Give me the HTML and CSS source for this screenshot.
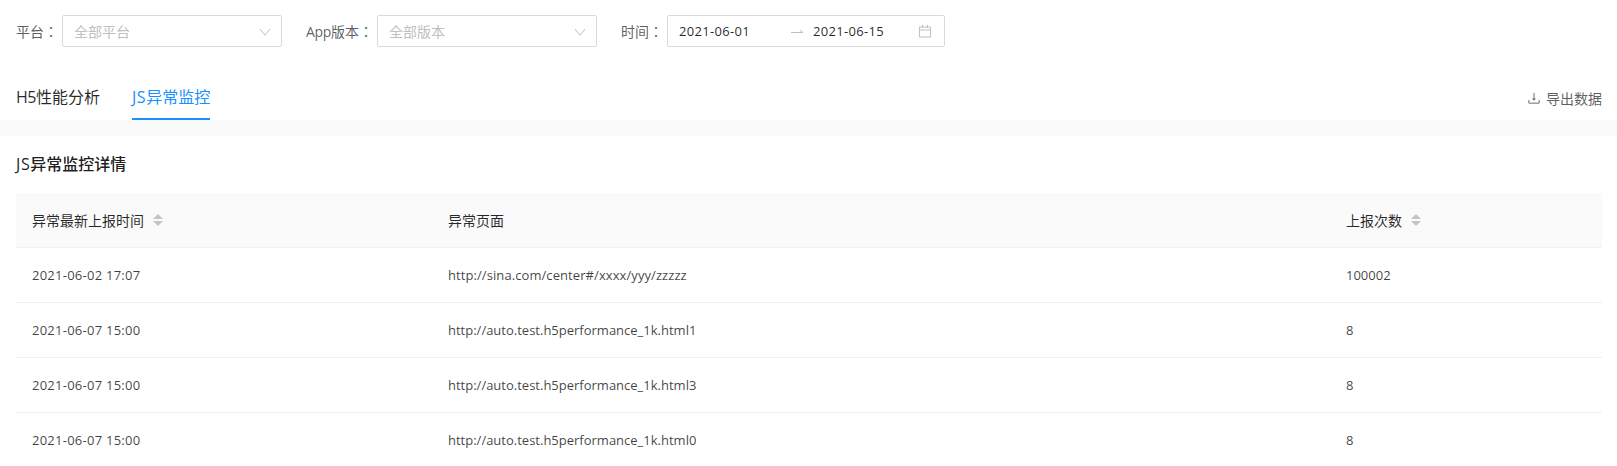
FILE: index.html
```html
<!DOCTYPE html>
<html lang="zh-CN">
<head>
<meta charset="utf-8">
<title>JS异常监控</title>
<link rel="stylesheet" href="styles.css">
</head>
<body>
<div class="filters">
  <div class="field">
    <span class="label">平台<span class="colon" lang="zh-TW">：</span></span>
    <div class="select">
      <span class="placeholder">全部平台</span>
      <svg class="chev" width="12" height="8" viewBox="0 0 12 8"><path d="M1 1 6 7.2 11 1" fill="none" stroke="#bfbfbf" stroke-width="1"/></svg>
    </div>
  </div>
  <div class="field">
    <span class="label"><span class="app">App</span>版本<span class="colon" lang="zh-TW">：</span></span>
    <div class="select">
      <span class="placeholder">全部版本</span>
      <svg class="chev" width="12" height="8" viewBox="0 0 12 8"><path d="M1 1 6 7.2 11 1" fill="none" stroke="#bfbfbf" stroke-width="1"/></svg>
    </div>
  </div>
  <div class="field">
    <span class="label">时间<span class="colon" lang="zh-TW">：</span></span>
    <div class="range">
      <span class="date">2021-06-01</span>
      <svg class="arrow" width="12" height="6" viewBox="0 0 12 6"><path d="M0 4.5H12L9 2" fill="none" stroke="#bfbfbf" stroke-width="1"/></svg>
      <span class="date">2021-06-15</span>
      <svg class="cal" width="14" height="14" viewBox="0 0 14 14"><path d="M1.5 3H12.5V13H1.5ZM1.5 6H12.5M4.5 1V4M9.5 1V4" fill="none" stroke="#bfbfbf" stroke-width="1"/></svg>
    </div>
  </div>
</div>

<div class="tabbar">
  <div class="tab"><span class="h5">H5</span>性能分析</div>
  <div class="tab active"><span class="js">JS</span>异常监控</div>
  <div class="export">
    <svg width="12" height="12" viewBox="0 0 14 14"><path d="M7 1V9M1 9.5V13H13V9.5" fill="none" stroke="#666" stroke-width="1.1"/><path d="M4.8 7.5H9.2L7 10.2Z" fill="#666"/></svg>
    <span>导出数据</span>
  </div>
</div>
<div class="band"></div>

<section class="panel">
  <h2 class="title"><span class="js">JS</span>异常监控详情</h2>
  <div class="table">
    <div class="row head">
      <div class="cell"><span>异常最新上报时间</span><i class="sorter"></i></div>
      <div class="cell"><span>异常页面</span></div>
      <div class="cell"><span>上报次数</span><i class="sorter"></i></div>
    </div>
    <div class="row">
      <div class="cell time">2021-06-02 17:07</div>
      <div class="cell url">http://sina.com/center#/xxxx/yyy/zzzzz</div>
      <div class="cell">100002</div>
    </div>
    <div class="row">
      <div class="cell time">2021-06-07 15:00</div>
      <div class="cell">http://auto.test.h5performance_1k.html1</div>
      <div class="cell">8</div>
    </div>
    <div class="row">
      <div class="cell time">2021-06-07 15:00</div>
      <div class="cell">http://auto.test.h5performance_1k.html3</div>
      <div class="cell">8</div>
    </div>
    <div class="row">
      <div class="cell time">2021-06-07 15:00</div>
      <div class="cell">http://auto.test.h5performance_1k.html0</div>
      <div class="cell">8</div>
    </div>
  </div>
</section>
</body>
</html>
```
FILE: styles.css
```css
* { box-sizing: border-box; }
html, body { margin: 0; padding: 0; height: 466px; overflow: hidden; background: #fff; }
body {
  font-family: "Open Sans", "Noto Sans CJK SC", sans-serif;
  font-size: 14px;
  color: rgba(0, 0, 0, 0.75);
}
.filters { display: flex; gap: 24px; padding: 15px 16px 0; height: 86px; }
.field { display: flex; align-items: center; height: 32px; }
.label { color: rgba(0, 0, 0, 0.65); white-space: nowrap; }
.colon { font-family: "Noto Sans CJK TC", sans-serif; }
.app { letter-spacing: -0.3px; }
.select {
  width: 220px; height: 32px; margin-left: 4px;
  border: 1px solid #d9d9d9; border-radius: 2px;
  display: flex; align-items: center; justify-content: space-between;
  padding: 0 10px 0 11px;
}
.placeholder { color: #bfbfbf; }
.chev { display: block; margin-top: 1px; }
.range {
  width: 278px; height: 32px; margin-left: 4px;
  border: 1px solid #d9d9d9; border-radius: 2px;
  display: flex; align-items: center; padding: 0 11px;
  color: rgba(0, 0, 0, 0.85);
}
.date { width: 71px; font-size: 13px; letter-spacing: 0.3px; white-space: nowrap; }
.arrow { margin: 0 10px 0 41px; }
.cal { margin-left: auto; margin-right: 1px; }
.tabbar { display: flex; align-items: stretch; gap: 32px; height: 34px; padding: 0 15px 0 16px; }
.tab { font-size: 16px; line-height: 22px; color: rgba(0, 0, 0, 0.85); border-bottom: 2px solid transparent; }
.tab.active { color: #1890ff; border-bottom-color: #1890ff; }
.h5 { letter-spacing: -0.5px; }
.js { letter-spacing: 0.6px; }
.export { margin-left: auto; display: flex; align-items: center; gap: 6px; height: 24px; color: rgba(0, 0, 0, 0.65); }
.band { height: 16px; background: #fafafa; }
.panel { padding: 0 15px 0 16px; }
.title { margin: 0; font-size: 16px; font-weight: 500; line-height: 57px; height: 57px; color: rgba(0, 0, 0, 0.9); }
.row {
  display: grid; grid-template-columns: 416px 898px 1fr;
  height: 55px; border-bottom: 1px solid #f0f0f0; align-items: center;
  font-size: 13px;
}
.row.head { background: #fafafa; color: rgba(0, 0, 0, 0.85); font-size: 14px; }
.cell { padding-left: 16px; display: flex; align-items: center; }
.time { letter-spacing: 0.25px; }
.url { letter-spacing: 0.08px; }
.sorter { position: relative; display: inline-block; width: 10px; height: 12px; margin-left: 9px; }
.sorter::before, .sorter::after {
  content: ""; position: absolute; left: 0;
  border-left: 5px solid transparent; border-right: 5px solid transparent;
}
.sorter::before { top: 0; border-bottom: 5.5px solid #c4c4c4; }
.sorter::after { bottom: 0; border-top: 5.5px solid #c4c4c4; }
```
